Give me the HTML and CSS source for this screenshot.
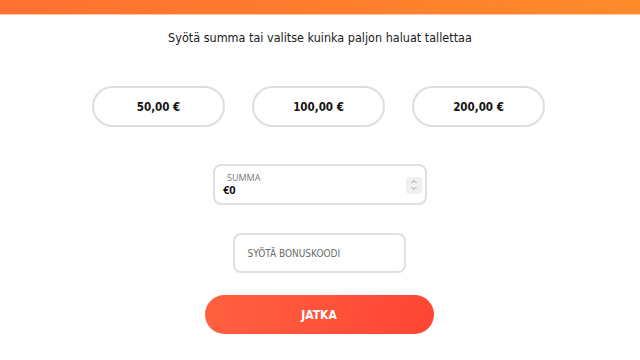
FILE: index.html
```html
<!DOCTYPE html>
<html lang="fi">
<head>
    <meta charset="UTF-8">
    <meta name="viewport" content="width=device-width, initial-scale=1.0">
    <title>Talletus</title>
    <link rel="stylesheet" href="styles.css">
</head>
<body>
    <div class="topbar"></div>

    <div class="deposit">
        <p class="deposit-title">Syötä summa tai valitse kuinka paljon haluat tallettaa</p>

        <div class="amounts">
            <button class="amount-btn">50,00 €</button>
            <button class="amount-btn">100,00 €</button>
            <button class="amount-btn">200,00 €</button>
        </div>

        <div class="sum-field">
            <div class="sum-text">
                <span class="sum-label">SUMMA</span>
                <span class="sum-value">€0</span>
            </div>
            <div class="spinner">
                <svg width="8" height="12" viewBox="0 0 8 12">
                    <path d="M1.5 4 L4 1.5 L6.5 4" fill="none" stroke="#9a9a9a" stroke-width="1"/>
                    <path d="M1.5 8 L4 10.5 L6.5 8" fill="none" stroke="#9a9a9a" stroke-width="1"/>
                </svg>
            </div>
        </div>

        <div class="bonus-field">SYÖTÄ BONUSKOODI</div>

        <button class="continue-btn">JATKA</button>
    </div>
</body>
</html>
```

FILE: styles.css
```css
* {
    margin: 0;
    padding: 0;
    box-sizing: border-box;
}

body {
    font-family: "DejaVu Sans Condensed", "DejaVu Sans", sans-serif;
    background: #fff;
    color: #222;
    width: 640px;
    height: 360px;
    overflow: hidden;
}

.topbar {
    height: 15px;
    background: linear-gradient(90deg, #ff7032, #ff8a2b);
    border-bottom: 1px solid #ffc8a2;
}

.deposit {
    display: flex;
    flex-direction: column;
    align-items: center;
}

.deposit-title {
    margin-top: 13px;
    font-size: 12.5px;
    line-height: 20px;
    color: #1a1a1a;
}

.amounts {
    display: flex;
    gap: 27px;
    margin-top: 38px;
    margin-right: 3px;
}

.amount-btn {
    width: 133px;
    height: 41px;
    border: 2px solid #dedede;
    border-radius: 21px;
    background: #fff;
    font-family: inherit;
    font-size: 11.5px;
    font-weight: bold;
    color: #111;
}

.sum-field {
    margin-top: 37px;
    width: 214px;
    height: 41px;
    border: 2px solid #e0e0e0;
    border-radius: 8px;
    display: flex;
    align-items: center;
    justify-content: space-between;
    padding: 0 3px 0 8px;
}

.sum-text {
    display: flex;
    flex-direction: column;
}

.sum-label {
    font-family: "Open Sans", sans-serif;
    font-size: 9px;
    line-height: 10px;
    color: #777;
    padding-left: 4px;
}

.sum-value {
    font-family: "Open Sans", sans-serif;
    font-size: 11px;
    line-height: 13px;
    font-weight: bold;
    color: #111;
}

.spinner {
    width: 16px;
    height: 17px;
    background: #f0f0f0;
    border-radius: 3px;
    display: flex;
    align-items: center;
    justify-content: center;
    margin-top: 1px;
}

.bonus-field {
    margin-top: 28px;
    width: 173px;
    height: 40px;
    border: 2px solid #e0e0e0;
    border-radius: 8px;
    padding-left: 13px;
    display: flex;
    align-items: center;
    font-size: 10px;
    color: #6a6a6a;
    margin-right: 2px;
}

.continue-btn {
    margin-top: 22px;
    width: 229px;
    height: 39px;
    border: none;
    border-radius: 20px;
    background: linear-gradient(100deg, #ff6140, #ff4535);
    color: #fff;
    font-family: inherit;
    font-size: 12px;
    font-weight: bold;
    margin-right: 2px;
}
```
